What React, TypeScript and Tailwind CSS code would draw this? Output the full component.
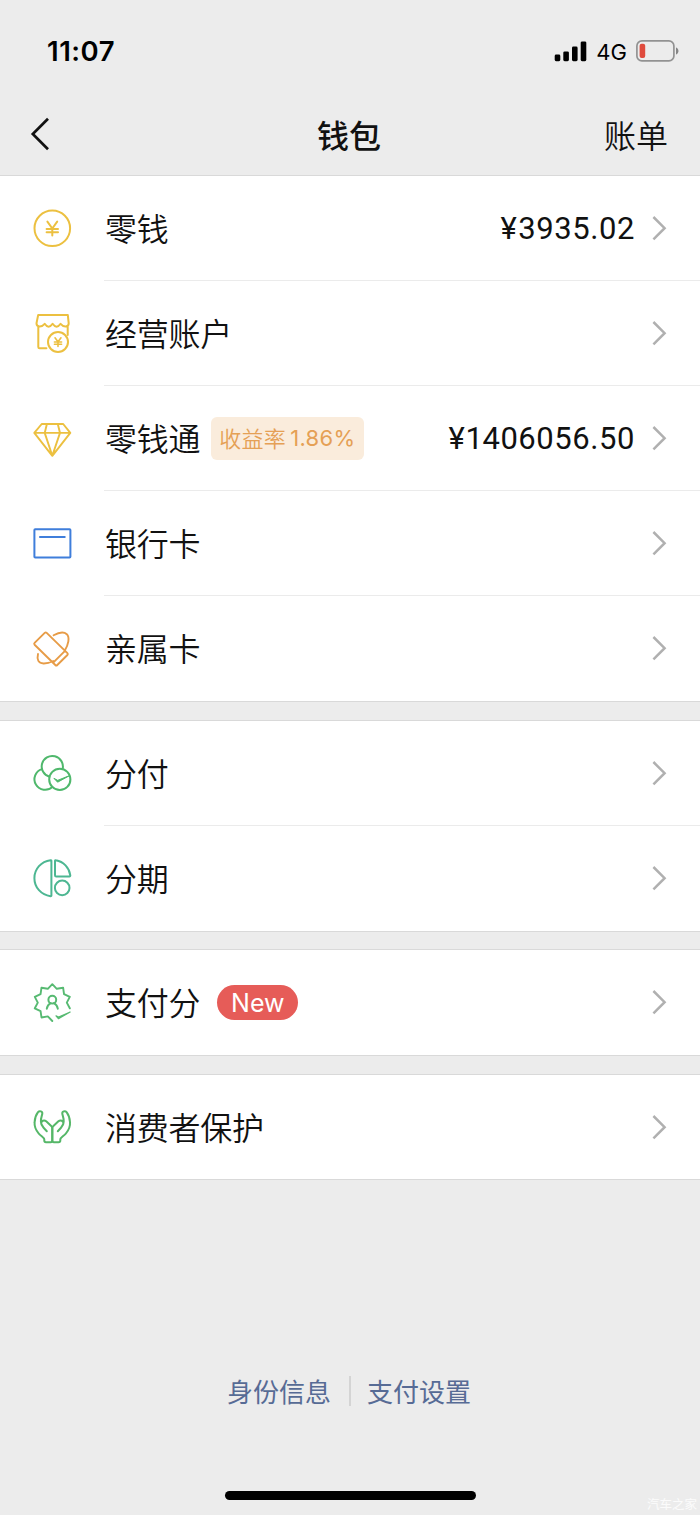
import type { ReactNode } from "react";

type Item = {
	label: string;
	icon: ReactNode;
	amount?: string;
	rate?: string;
	isNew?: boolean;
};

function Icon({ className, children }: { className: string; children: ReactNode }) {
	return (
		<svg
			viewBox="0 0 40 40"
			fill="none"
			stroke="currentColor"
			strokeWidth="2"
			strokeLinecap="round"
			strokeLinejoin="round"
			className={`h-10 w-10 shrink-0 ${className}`}
		>
			{children}
		</svg>
	);
}

// ten pointed badge, left open at the lower right for the tick
const badgePoints = Array.from({ length: 17 }, (_, i) => {
	const angle = ((108 - i * 18) * Math.PI) / 180;
	const radius = i % 2 === 0 ? 18.4 : 14.5;
	return `${(20.3 + radius * Math.sin(angle)).toFixed(2)},${(20.6 - radius * Math.cos(angle)).toFixed(2)}`;
}).join(" ");

const hand =
	"M14 35.2Q12.3 35.2 12.3 33.5V32.4C12.3 30.6 9.4 29.4 6.8 26.6C3.6 23 2.3 18.8 2.6 15.2C2.8 11 4.2 7.6 6 5.2C7.6 3.4 10.7 4.4 10.3 6.8C9.8 9.4 8.7 11 8.9 14.6C9 17.5 10.1 19.2 11.6 20.8L14.8 24.2M9.2 16.6C8.9 14 12 12.4 14.2 14.2L19.2 18.9Q20.3 20 20.3 21.6V33.6Q20.3 35.2 18.7 35.2H14";

const groups: Item[][] = [
	[
		{
			label: "零钱",
			amount: "¥3935.02",
			icon: (
				<Icon className="text-[#ecc040]">
					<circle cx="20.3" cy="20.3" r="17.8" />
					<path d="M15.4 13.6L20.3 20.5L25.2 13.6M20.3 20.5V27.6M14.6 20.9H26M14.6 24.2H26" />
				</Icon>
			),
		},
		{
			label: "经营账户",
			icon: (
				<Icon className="text-[#ecc040]">
					<path d="M6.2 1.9H35.8L36.7 10.3C36.7 14.2 32 14.8 28.6 10.8C26 14.6 23.2 14.6 20.6 10.8C18 14.6 15.2 14.6 12.7 10.8C9.2 14.8 4.5 14.2 4.5 10.3ZM6.3 13.2V34Q6.3 35.3 7.6 35.3H14.4M35.7 13.2V22" />
					<circle cx="26" cy="29" r="10" />
					<path strokeWidth="1.6" d="M23 24.8L26 28.8L29 24.8M26 28.8V33.4M22.4 29H29.6M22.4 31.2H29.6" />
				</Icon>
			),
		},
		{
			label: "零钱通",
			rate: "收益率1.86%",
			amount: "¥1406056.50",
			icon: (
				<Icon className="text-[#ecc040]">
					<path
						strokeWidth="1.9"
						d="M9.7 6H31.2L38.3 14.9L20.3 37.8L2.3 14.9ZM2.3 14.9H38.3M14.9 6L12.7 14.9L20.3 37.8L28 14.9L25.8 6"
					/>
				</Icon>
			),
		},
		{
			label: "银行卡",
			icon: (
				<Icon className="text-[#3f7edb]">
					<rect x="2.4" y="6.3" width="36" height="28.3" rx="0.8" />
					<path strokeLinecap="butt" d="M7.2 14H33.5" />
				</Icon>
			),
		},
		{
			label: "亲属卡",
			icon: (
				<Icon className="text-[#e79c47]">
					<path
						strokeWidth="1.9"
						d="M12.7 4.9Q13.7 4 14.7 4.9L35.4 25.1Q36.3 26 35.4 27L25.3 37Q24.3 38 23.3 37L2.6 16.7Q1.7 15.7 2.6 14.8ZM33 22.8L21.2 34.6M21.6 7.3C26.5 4.5 32 3.6 34.8 6.2C38 9.5 36.4 16.5 32.8 22.4M6 26C4.6 31.8 6.5 35.3 11.5 35.5C15.5 35.6 18.6 34.3 21.2 33"
					/>
				</Icon>
			),
		},
	],
	[
		{
			label: "分付",
			icon: (
				<Icon className="text-[#4fb86c]">
					<path d="M30.6 16.1A10.6 10.6 0 1 0 17.5 23.8" />
					<path d="M10 16.1A10.6 10.6 0 1 0 20.4 33.9" />
					<circle cx="27.8" cy="26.4" r="10.6" />
					<path d="M22.2 25.6L25.6 29.2L37.8 22.5L26 27.2Z" fill="currentColor" strokeWidth="1" />
				</Icon>
			),
		},
		{
			label: "分期",
			icon: (
				<Icon className="text-[#4db792]">
					<path d="M19.4 3Q19.4 2.1 18.5 2.2C9.2 3.4 2.4 11 2.4 20.2S9.2 37 18.5 38.2Q19.4 38.3 19.4 37.4Z" />
					<path d="M23 3Q23 2.1 23.9 2.3C31.5 3.6 37.2 9.6 38.3 17.3Q38.4 18.4 37.4 18.4H24.2Q23 18.4 23 17.2Z" />
					<circle cx="30.2" cy="29.9" r="7.3" />
				</Icon>
			),
		},
	],
	[
		{
			label: "支付分",
			isNew: true,
			icon: (
				<Icon className="text-[#57ba72]">
					<polyline points={badgePoints} strokeWidth="1.9" />
					<circle cx="20.3" cy="17.7" r="3.9" />
					<path d="M14.8 26.7C15.3 23.8 16.6 22.2 18.6 21.1M25.8 26.7C25.3 23.8 24 22.2 22 21.1" />
					<path d="M24 33.8L26.4 36.7L38.2 30L26.6 35Z" strokeWidth="1.2" fill="currentColor" />
				</Icon>
			),
		},
	],
	[
		{
			label: "消费者保护",
			icon: (
				<Icon className="text-[#55b768]">
					<path d={hand} />
					<path d={hand} transform="translate(40.6 0) scale(-1 1)" />
				</Icon>
			),
		},
	],
];

function Amount({ value }: { value: string }) {
	return (
		<span className="ml-auto font-['Roboto',sans-serif] text-[31px] leading-none tracking-[0.55px]">
			{value.split("").map((char, i) => (
				<span key={i} className={char === "1" ? "-mr-px -ml-px" : char === "¥" ? "mr-px" : ""}>
					{char}
				</span>
			))}
		</span>
	);
}

function Row({ item, last }: { item: Item; last: boolean }) {
	return (
		<li className="flex h-[105px] pl-8">
			<div className="flex h-[104px] items-center">{item.icon}</div>
			<div className={`ml-8 flex flex-1 items-center border-b pr-[33px] ${last ? "border-transparent" : "border-[#ebebeb]"}`}>
				<span className="ml-px pb-0.5 text-[32px] leading-none font-[350] tracking-[-0.25px] whitespace-nowrap">
					{item.label}
				</span>
				{item.rate && (
					<span className="ml-[11px] flex h-[43px] w-[153px] items-center rounded-md bg-[#faecdc] pl-2 text-[22px] font-[350] tracking-[0.3px] text-[#e5a055]">
						<span className="pb-0.5">{item.rate.slice(0, 3)}</span>
						<span className="mt-px ml-1 font-['Inter',sans-serif] text-[22px] font-normal">{item.rate.slice(3)}</span>
					</span>
				)}
				{item.isNew && (
					<span className="ml-[17px] flex h-[35px] w-[81px] items-center justify-center rounded-full bg-[#e65c58] pt-[3px] font-['Inter',sans-serif] text-[25px] font-normal text-white">
						New
					</span>
				)}
				{item.amount && <Amount value={item.amount} />}
				<svg
					viewBox="0 0 16 26"
					fill="none"
					stroke="#b0b0b0"
					strokeWidth="2.5"
					className={`h-[26px] w-4 shrink-0 ${item.amount ? "ml-4" : "ml-auto"}`}
				>
					<path d="M2.4 2L13.6 13.2L2.4 24.4" />
				</svg>
			</div>
		</li>
	);
}

function StatusBar() {
	return (
		<div className="flex h-[94px] items-center pt-[9px] pr-[21px] pl-[47px] text-black">
			<span className="font-['Inter',sans-serif] text-[27.5px] font-semibold tracking-[0.5px]">11:07</span>
			<svg viewBox="0 0 33 21" className="ml-auto h-[21px] w-[33px]">
				<rect x="0.7" y="13.5" width="5.6" height="6.7" rx="1.4" />
				<rect x="9.3" y="10.4" width="5.6" height="9.8" rx="1.4" />
				<rect x="18" y="5.6" width="5.6" height="14.6" rx="1.4" />
				<rect x="26.7" y="0.4" width="5.6" height="19.8" rx="1.4" />
			</svg>
			<span className="mt-0.5 ml-[9px] font-['Inter',sans-serif] text-[22px] font-normal">4G</span>
			<svg viewBox="0 0 43 22" className="-mt-0.5 ml-[9px] h-[22px] w-[43px]" fill="none">
				<rect x="0.9" y="0.9" width="37" height="20" rx="5" stroke="#929292" strokeWidth="1.7" />
				<rect x="3.6" y="3.8" width="5.6" height="14.2" rx="2" fill="#df4b3d" />
				<path d="M40 7.5C43.3 8.6 43.3 13.4 40 14.5Z" fill="#858585" />
			</svg>
		</div>
	);
}

export default function App() {
	return (
		<div className="flex h-[1515px] w-[700px] flex-col overflow-hidden bg-[#ececec] font-['Noto_Sans_CJK_SC',sans-serif] text-[#111]">
			<header className="h-[176px] border-b border-[#d9d9d9]">
				<StatusBar />
				<div className="grid h-[79px] grid-cols-3 items-center pr-8 pl-[30px]">
					<svg viewBox="0 0 20 34" fill="none" stroke="#111" strokeWidth="2.7" className="h-[34px] w-5">
						<path d="M18 1.8L2.8 17L18 32.2" />
					</svg>
					<h1 className="text-center text-[32px] leading-none font-medium">钱包</h1>
					<span className="text-right text-[32px] leading-none font-[350]">账单</span>
				</div>
			</header>

			<main className="flex flex-col">
				{groups.map((items, i) => (
					<ul
						key={items[0].label}
						className={`bg-white ${i === 0 ? "" : "border-t border-[#d9d9d9]"} ${i === 1 ? "mt-[18px]" : ""} ${i === 2 ? "mt-[17px]" : ""} ${i === 3 ? "mt-[18px]" : ""}`}
					>
						{items.map((item, j) => (
							<Row key={item.label} item={item} last={j === items.length - 1} />
						))}
						<li className={`h-px bg-[#d9d9d9] ${i === groups.length - 1 ? "-mt-px" : ""}`} />
					</ul>
				))}
			</main>

			<footer className="relative flex flex-1 flex-col items-center pt-[193px]">
				<div className="-ml-0.5 flex items-center text-[26px] leading-[36px] text-[#576b95]">
					<span>身份信息</span>
					<span className="mr-4 ml-[18px] h-[30px] w-0.5 bg-[#d4d4d4]" />
					<span>支付设置</span>
				</div>
				<div className="mt-auto mb-[15px] h-[9px] w-[251px] rounded-full bg-black" />
				<span className="absolute right-[3px] bottom-0.5 text-[12.5px] leading-[18px] text-white/80">汽车之家</span>
			</footer>
		</div>
	);
}
